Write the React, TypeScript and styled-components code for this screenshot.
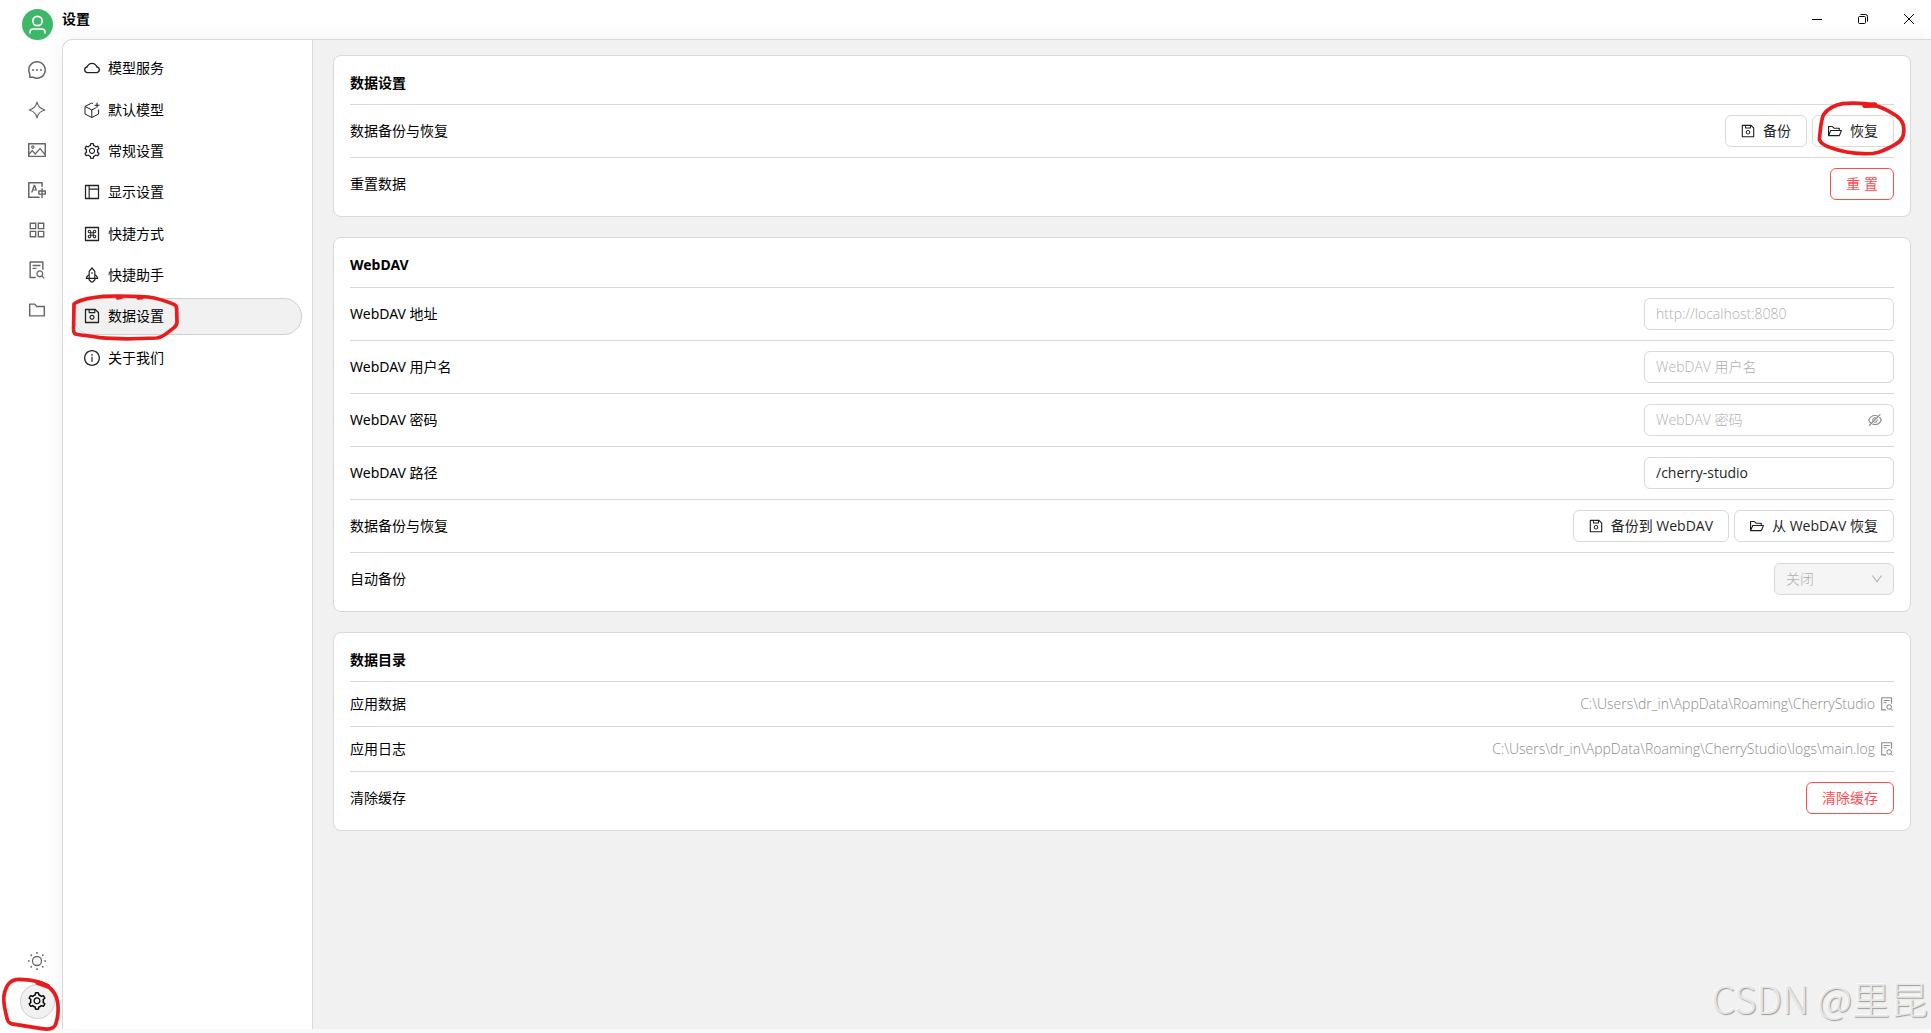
import React from "react";
import styled, { createGlobalStyle, css } from "styled-components";
import type { IconType } from "react-icons";
import {
  AiOutlineAppstore,
  AiOutlineCloud,
  AiOutlineDown,
  AiOutlineEyeInvisible,
  AiOutlineFileSearch,
  AiOutlineFolder,
  AiOutlineFolderOpen,
  AiOutlineInfoCircle,
  AiOutlineLayout,
  AiOutlineMacCommand,
  AiOutlineMessage,
  AiOutlinePicture,
  AiOutlineRocket,
  AiOutlineSave,
  AiOutlineSetting,
  AiOutlineTranslation,
} from "react-icons/ai";

const color = {
  line: "#d9d9d9",
  soft: "#f1f1f1",
  danger: "#ff4d4f",
  marker: "#e81c1c",
  muted: "#8c8c8c",
  hint: "#b0b0b0",
};

const controlFont = `"Open Sans", "Noto Sans CJK SC", sans-serif`;

const GlobalStyle = createGlobalStyle`
  *, *::before, *::after { box-sizing: border-box; }
  body {
    margin: 0;
    background: #fff;
    color: #000;
    font-family: "Noto Sans", "Noto Sans CJK SC", sans-serif;
    font-size: 14px;
    line-height: 22px;
  }
  button, input, select { font: inherit; color: inherit; }
  button { cursor: pointer; }
  svg { display: block; flex: none; }
`;

const Window = styled.div`
  display: flex;
  height: 100vh;
  padding-bottom: 4px;
  position: relative;
  overflow: hidden;
`;

const Rail = styled.nav`
  display: flex;
  flex-direction: column;
  align-items: center;
  flex: none;
  width: 62px;
  padding: 9px 0 10px 13px;
`;

const Avatar = styled.button`
  display: grid;
  place-items: center;
  width: 31px;
  height: 31px;
  padding: 0;
  margin-bottom: 13px;
  border: 0;
  border-radius: 50%;
  background: #3cb868;
`;

const RailGroup = styled.div`
  display: flex;
  flex-direction: column;
  gap: 5px;
`;

const RailSpacer = styled.div`
  flex: 1;
`;

const RailButton = styled.button<{ $active?: boolean }>`
  position: relative;
  display: grid;
  place-items: center;
  width: 35px;
  height: 35px;
  padding: 0 1px 1px 0;
  border: 1px solid ${(p) => (p.$active ? "#cfcfcf" : "transparent")};
  border-radius: 50%;
  background: ${(p) => (p.$active ? color.soft : "transparent")};
  color: ${(p) => (p.$active ? "#000" : "#666")};
  font-size: 18px;
`;

const Workspace = styled.div`
  display: flex;
  flex-direction: column;
  flex: 1;
  min-width: 0;
`;

const TitleBar = styled.header`
  display: flex;
  align-items: center;
  justify-content: space-between;
  flex: none;
  height: 39px;
  padding: 0 11px 2px 0;
`;

const PageTitle = styled.h1`
  margin: 0;
  font-size: 14px;
  font-weight: 700;
`;

const WindowControls = styled.div`
  display: flex;
  gap: 24px;
`;

const WindowButton = styled.button`
  display: grid;
  place-items: center;
  width: 22px;
  height: 22px;
  padding: 0;
  border: 0;
  background: none;
`;

const Panel = styled.div`
  display: flex;
  flex: 1;
  min-height: 0;
  border: solid ${color.line};
  border-width: 1px 0 0 1px;
  border-top-left-radius: 10px;
  background: #fff;
  box-shadow: 0 0 20px rgba(0, 0, 0, 0.06);
`;

const Menu = styled.nav`
  flex: none;
  width: 250px;
  padding: 10px;
  border-right: 1px solid ${color.line};
`;

const MenuList = styled.div`
  display: grid;
  grid-auto-rows: 1fr;
  gap: 5px;
  height: 326px;
`;

const MenuItem = styled.a<{ $active?: boolean }>`
  position: relative;
  display: flex;
  align-items: center;
  gap: 8px;
  padding: 0 10px;
  border: 1px solid ${(p) => (p.$active ? "#cfcfcf" : "transparent")};
  border-radius: 18px;
  background: ${(p) => (p.$active ? color.soft : "transparent")};
  color: #000;
  text-decoration: none;

  > svg:first-child {
    width: 16px;
    height: 16px;
    color: #222;
  }
`;

const Main = styled.main`
  display: flex;
  flex-direction: column;
  gap: 20px;
  flex: 1;
  min-width: 0;
  padding: 15px 20px;
  background: ${color.soft};
  overflow: hidden;
`;

const Card = styled.section`
  padding: 16px;
  border: 1px solid ${color.line};
  border-radius: 8px;
  background: #fff;
`;

const CardTitle = styled.h2<{ $gap?: number }>`
  margin: 0 0 ${(p) => p.$gap ?? 10}px;
  font-size: 14px;
  line-height: 22px;
  font-weight: 700;
`;

const Row = styled.div<{ $compact?: boolean }>`
  display: flex;
  align-items: center;
  justify-content: space-between;
  height: ${(p) => (p.$compact ? 45 : 53)}px;
  border-top: 1px solid ${color.line};

  &:last-child {
    height: 43px;
    padding-top: 10px;
  }
`;

const Actions = styled.div`
  display: flex;
  gap: 5px;
`;

const Button = styled.button<{ $danger?: boolean }>`
  position: relative;
  display: flex;
  align-items: center;
  gap: 8px;
  height: 32px;
  padding: 0 15px;
  border: 1px solid ${(p) => (p.$danger ? color.danger : color.line)};
  border-radius: 6px;
  background: #fff;
  color: ${(p) => (p.$danger ? color.danger : "#1f1f1f")};
  font-family: ${controlFont};
  white-space: nowrap;
`;

const field = css`
  height: 32px;
  border: 1px solid ${color.line};
  border-radius: 6px;
  background: #fff;
`;

const TextBox = styled.div`
  ${field}
  display: flex;
  align-items: center;
  width: 250px;
  padding: 0 11px;
`;

const TextInput = styled.input`
  flex: 1;
  min-width: 0;
  padding: 0;
  border: 0;
  outline: 0;
  background: none;
  color: #1f1f1f;
  font-family: ${controlFont};

  &::placeholder {
    color: ${color.hint};
    font-weight: 300;
    opacity: 1;
  }
`;

const PlainIconButton = styled.button`
  padding: 0;
  border: 0;
  background: none;
  color: #8c8c8c;
`;

const SelectBox = styled.div`
  position: relative;
  width: 120px;
  color: ${color.hint};

  svg {
    position: absolute;
    right: 11px;
    top: 10px;
    font-size: 12px;
    pointer-events: none;
  }
`;

const Select = styled.select`
  ${field}
  appearance: none;
  width: 100%;
  padding: 0 11px;
  background: #f5f5f5;
  font-weight: 300;
  opacity: 1;
`;

const PathValue = styled.div`
  display: flex;
  align-items: center;
  gap: 5px;
  color: ${color.muted};
  font-family: ${controlFont};
  font-weight: 300;
`;

const Marker = styled.svg<{ $left: number; $top: number }>`
  position: absolute;
  left: ${(p) => p.$left}px;
  top: ${(p) => p.$top}px;
  z-index: 2;
  overflow: visible;
  pointer-events: none;
  fill: none;
  stroke: ${color.marker};
  stroke-width: 11;
  stroke-linecap: round;
  stroke-linejoin: round;
`;

const Watermark = styled.div`
  position: absolute;
  right: 3px;
  bottom: 8px;
  color: #e6e6e6;
  font-family: "Noto Sans CJK SC", sans-serif;
  font-weight: 300;
  font-size: 38px;
  line-height: 54px;
  text-shadow: 1px 1px 1px #9c9c9c, -1px -1px 0 #fafafa;
  pointer-events: none;
`;

/* Ant glyphs are drawn inside a 64-unit margin; crop it so they fill their box. */
const Glyph = ({ of: Icon }: { of: IconType }) => <Icon viewBox="64 64 896 896" />;

const SparkleIcon = () => (
  <svg width="18" height="18" viewBox="0 0 18 18" fill="none" stroke="currentColor" strokeLinejoin="round">
    <path d="M9 1.2Q10.4 7.4 16.8 9Q10.4 10.6 9 16.8Q7.6 10.6 1.2 9Q7.6 7.4 9 1.2Z" strokeWidth="1.2" />
  </svg>
);

const SunIcon = () => (
  <svg width="18" height="18" viewBox="0 0 18 18" fill="none" stroke="currentColor" strokeWidth="1.3">
    <circle cx="9" cy="9" r="4.5" />
    <path
      strokeWidth="1.5"
      d="M9 0v1.7M9 16.3V18M0 9h1.7M16.3 9H18M2.6 2.6l1.2 1.2M14.2 14.2l1.2 1.2M2.6 15.4l1.2-1.2M14.2 3.8l1.2-1.2"
    />
  </svg>
);

const CubeIcon = () => (
  <svg viewBox="0 0 16 16" fill="none" stroke="currentColor" strokeLinejoin="round">
    <path d="M9 1.6L7.8 1L1 4.4V12l6.8 3.5 6.8-3.5V7.5M1 4.4l6.8 3.5 4-2M7.8 7.9v7.6" />
    <path strokeWidth="1.1" d="M13 .8v5M10.5 3.3h5" />
  </svg>
);

const railItems = [
  { label: "助手", icon: <Glyph of={AiOutlineMessage} /> },
  { label: "智能体", icon: <SparkleIcon /> },
  { label: "绘画", icon: <Glyph of={AiOutlinePicture} /> },
  { label: "翻译", icon: <Glyph of={AiOutlineTranslation} /> },
  { label: "小程序", icon: <Glyph of={AiOutlineAppstore} /> },
  { label: "知识库", icon: <Glyph of={AiOutlineFileSearch} /> },
  { label: "文件", icon: <Glyph of={AiOutlineFolder} /> },
];

const menuItems = [
  { label: "模型服务", icon: <Glyph of={AiOutlineCloud} /> },
  { label: "默认模型", icon: <CubeIcon /> },
  { label: "常规设置", icon: <Glyph of={AiOutlineSetting} /> },
  { label: "显示设置", icon: <Glyph of={AiOutlineLayout} /> },
  { label: "快捷方式", icon: <Glyph of={AiOutlineMacCommand} /> },
  { label: "快捷助手", icon: <Glyph of={AiOutlineRocket} /> },
  { label: "数据设置", icon: <Glyph of={AiOutlineSave} />, active: true },
  { label: "关于我们", icon: <Glyph of={AiOutlineInfoCircle} /> },
];

function Sidebar() {
  return (
    <Rail>
      <Avatar aria-label="用户">
        <svg width="17" height="19" viewBox="0 0 17 19" fill="none" stroke="#fff" strokeWidth="1.7">
          <circle cx="8.5" cy="6" r="4.7" />
          <path d="M1 18.5v-1.3q0-3.2 3.2-3.2h8.6q3.2 0 3.2 3.2v1.3" />
        </svg>
      </Avatar>
      <RailGroup>
        {railItems.map((item) => (
          <RailButton key={item.label} aria-label={item.label}>
            {item.icon}
          </RailButton>
        ))}
      </RailGroup>
      <RailSpacer />
      <RailGroup>
        <RailButton aria-label="主题">
          <SunIcon />
        </RailButton>
        <RailButton aria-label="设置" $active>
          <Glyph of={AiOutlineSetting} />
          <Marker $left={-21} $top={-10} width="62" height="57" viewBox="0 135 186 171">
            <path d="M145 170C120 152 85 148 57 148C28 148 16 172 12 196C9 220 17 250 22 268C25 280 34 282 50 284L125 296C145 299 163 296 167 283C174 262 176 240 173 218C170 195 158 178 140 167" />
            <path strokeWidth="15" d="M114 158L142 168" />
          </Marker>
        </RailButton>
      </RailGroup>
    </Rail>
  );
}

function Header() {
  return (
    <TitleBar>
      <PageTitle>设置</PageTitle>
      <WindowControls>
        <WindowButton aria-label="最小化">
          <svg width="10" height="10" viewBox="0 0 10 10" stroke="#000">
            <path d="M0 5.5h10" />
          </svg>
        </WindowButton>
        <WindowButton aria-label="还原">
          <svg width="10" height="10" viewBox="0 0 10 10" fill="none" stroke="#000">
            <rect x=".5" y="2.5" width="7" height="7" rx="1" />
            <path d="M2.5.5H7.5Q9.5.5 9.5 2.5V7.5" />
          </svg>
        </WindowButton>
        <WindowButton aria-label="关闭">
          <svg width="10" height="10" viewBox="0 0 10 10" stroke="#000">
            <path d="M0 0l10 10M10 0L0 10" />
          </svg>
        </WindowButton>
      </WindowControls>
    </TitleBar>
  );
}

function SettingsMenu() {
  return (
    <Menu>
      <MenuList>
        {menuItems.map((item) => (
          <MenuItem key={item.label} href="#" $active={item.active}>
            {item.icon}
            {item.label}
            {item.active && (
              <Marker $left={-4} $top={-6} width="110" height="50" viewBox="210 309 330 150">
                <path d="M222 342C235 330 270 323 310 319C350 317 410 319 445 321C475 325 500 334 522 343Q531 347 530 360L531 395Q531 405 522 413L495 434Q483 443 470 444C410 447 340 447 300 443C265 437 240 436 224 431Q219 425 221 400Z" />
                <path d="M353 324L365 321M415 324L425 323" />
              </Marker>
            )}
          </MenuItem>
        ))}
      </MenuList>
    </Menu>
  );
}

export default function App() {
  return (
    <Window>
      <GlobalStyle />
      <Sidebar />
      <Workspace>
        <Header />
        <Panel>
          <SettingsMenu />
          <Main>
            <Card>
              <CardTitle>数据设置</CardTitle>
              <Row>
                <span>数据备份与恢复</span>
                <Actions>
                  <Button>
                    <Glyph of={AiOutlineSave} />
                    备份
                  </Button>
                  <Button>
                    <Glyph of={AiOutlineFolderOpen} />
                    恢复
                    <Marker $left={2} $top={-16} width="93" height="57" viewBox="345 300 279 171">
                      <path d="M528 316C495 310 455 308 428 311C400 316 380 330 370 345C362 365 361 395 358 418C362 432 375 438 393 443C420 453 450 460 490 461C530 463 550 452 570 442C590 433 606 424 610 405C615 380 610 362 590 348C570 335 550 322 525 317" />
                      <path strokeWidth="16" d="M495 316L524 315" />
                    </Marker>
                  </Button>
                </Actions>
              </Row>
              <Row>
                <span>重置数据</span>
                <Button $danger>重 置</Button>
              </Row>
            </Card>

            <Card>
              <CardTitle $gap={11}>WebDAV</CardTitle>
              <Row>
                <label htmlFor="dav-host">WebDAV 地址</label>
                <TextBox>
                  <TextInput id="dav-host" placeholder="http://localhost:8080" />
                </TextBox>
              </Row>
              <Row>
                <label htmlFor="dav-user">WebDAV 用户名</label>
                <TextBox>
                  <TextInput id="dav-user" placeholder="WebDAV 用户名" />
                </TextBox>
              </Row>
              <Row>
                <label htmlFor="dav-pass">WebDAV 密码</label>
                <TextBox>
                  <TextInput id="dav-pass" type="password" placeholder="WebDAV 密码" />
                  <PlainIconButton type="button" aria-label="显示密码">
                    <Glyph of={AiOutlineEyeInvisible} />
                  </PlainIconButton>
                </TextBox>
              </Row>
              <Row>
                <label htmlFor="dav-path">WebDAV 路径</label>
                <TextBox>
                  <TextInput id="dav-path" defaultValue="/cherry-studio" />
                </TextBox>
              </Row>
              <Row>
                <span>数据备份与恢复</span>
                <Actions>
                  <Button>
                    <Glyph of={AiOutlineSave} />
                    备份到 WebDAV
                  </Button>
                  <Button>
                    <Glyph of={AiOutlineFolderOpen} />从 WebDAV 恢复
                  </Button>
                </Actions>
              </Row>
              <Row>
                <label htmlFor="auto-backup">自动备份</label>
                <SelectBox>
                  <Select id="auto-backup" disabled defaultValue="off">
                    <option value="off">关闭</option>
                  </Select>
                  <Glyph of={AiOutlineDown} />
                </SelectBox>
              </Row>
            </Card>

            <Card>
              <CardTitle>数据目录</CardTitle>
              <Row $compact>
                <span>应用数据</span>
                <PathValue>
                  {"C:\\Users\\dr_in\\AppData\\Roaming\\CherryStudio"}
                  <PlainIconButton aria-label="打开应用数据">
                    <Glyph of={AiOutlineFileSearch} />
                  </PlainIconButton>
                </PathValue>
              </Row>
              <Row $compact>
                <span>应用日志</span>
                <PathValue>
                  {"C:\\Users\\dr_in\\AppData\\Roaming\\CherryStudio\\logs\\main.log"}
                  <PlainIconButton aria-label="打开应用日志">
                    <Glyph of={AiOutlineFileSearch} />
                  </PlainIconButton>
                </PathValue>
              </Row>
              <Row>
                <span>清除缓存</span>
                <Button $danger>清除缓存</Button>
              </Row>
            </Card>
          </Main>
        </Panel>
      </Workspace>
      <Watermark>CSDN @里昆</Watermark>
    </Window>
  );
}
